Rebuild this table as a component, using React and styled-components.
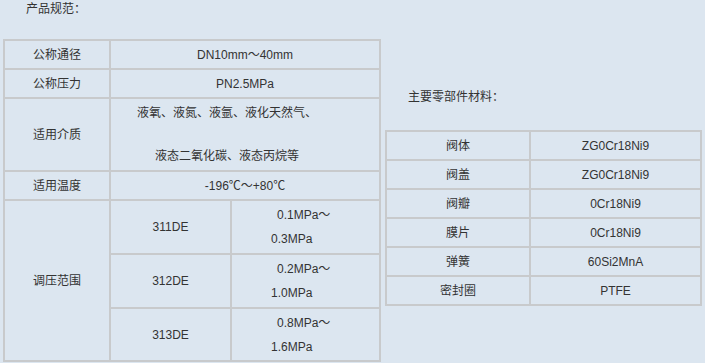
import React from 'react';
import styled, { createGlobalStyle } from 'styled-components';

const GlobalStyle = createGlobalStyle`
    html, body {
        margin: 0;
        padding: 0;
        background: #dce6f0;
    }
    body {
        font-family: "Liberation Sans", "Noto Sans CJK SC", sans-serif;
        font-size: 12px;
        color: #333;
    }
`;

const Page = styled.div`
    display: flex;
    align-items: flex-start;
    gap: 4px;
    padding-left: 3px;
    height: 363px;
    box-sizing: border-box;
`;

const Column = styled.div`
    display: flex;
    flex-direction: column;
    padding-top: ${props => props.top}px;
`;

const Heading = styled.div`
    height: 16px;
    line-height: 16px;
    padding-left: 23px;
    margin-bottom: ${props => props.gap}px;
`;

const Grid = styled.div`
    display: grid;
    grid-template-columns: ${props => props.cols};
    grid-template-rows: ${props => props.rows};
    border: 1px solid #c8cacc;
`;

const Cell = styled.div`
    box-sizing: border-box;
    border: 1px solid #c8cacc;
    display: flex;
    align-items: center;
    justify-content: center;
    text-align: center;
    line-height: 16px;
    grid-column: ${props => props.col || 'auto'};
    grid-row: ${props => props.row || 'auto'};
`;

const MediaCell = styled(Cell)`
    flex-direction: column;
    gap: 27px;
    padding-right: 36px;
`;

const RangeCell = styled(Cell)`
    flex-direction: column;
    align-items: flex-start;
    justify-content: center;
    text-align: left;
    padding-left: 39px;
    line-height: 24px;
`;

const FirstLine = styled.span`
    padding-left: 6px;
`;

const ranges = [
    { model: '311DE', from: '0.1MPa～', to: '0.3MPa' },
    { model: '312DE', from: '0.2MPa～', to: '1.0MPa' },
    { model: '313DE', from: '0.8MPa～', to: '1.6MPa' },
];

const parts = [
    ['阀体', 'ZG0Cr18Ni9'],
    ['阀盖', 'ZG0Cr18Ni9'],
    ['阀瓣', '0Cr18Ni9'],
    ['膜片', '0Cr18Ni9'],
    ['弹簧', '60Si2MnA'],
    ['密封圈', 'PTFE'],
];

const App = () => (
    <>
        <GlobalStyle />
        <Page>
            <Column top={1}>
                <Heading gap={22}>产品规范：</Heading>
                <Grid cols="106px 121px 149px" rows="29px 29px 73px 29px 54px 54px 53px">
                    <Cell>公称通径</Cell>
                    <Cell col="2 / 4">DN10mm～40mm</Cell>
                    <Cell>公称压力</Cell>
                    <Cell col="2 / 4">PN2.5MPa</Cell>
                    <Cell>适用介质</Cell>
                    <MediaCell col="2 / 4">
                        <span>液氧、液氮、液氩、液化天然气、</span>
                        <span>液态二氧化碳、液态丙烷等</span>
                    </MediaCell>
                    <Cell>适用温度</Cell>
                    <Cell col="2 / 4">-196℃～+80℃</Cell>
                    <Cell col="1" row="5 / 8">调压范围</Cell>
                    {ranges.map(r => (
                        <React.Fragment key={r.model}>
                            <Cell col="2">{r.model}</Cell>
                            <RangeCell col="3">
                                <FirstLine>{r.from}</FirstLine>
                                <span>{r.to}</span>
                            </RangeCell>
                        </React.Fragment>
                    ))}
                </Grid>
            </Column>
            <Column top={89}>
                <Heading gap={25}>主要零部件材料：</Heading>
                <Grid cols="144px 171px" rows="repeat(6, 29px)">
                    {parts.map(([name, material]) => (
                        <React.Fragment key={name}>
                            <Cell>{name}</Cell>
                            <Cell>{material}</Cell>
                        </React.Fragment>
                    ))}
                </Grid>
            </Column>
        </Page>
    </>
);

export default App;
